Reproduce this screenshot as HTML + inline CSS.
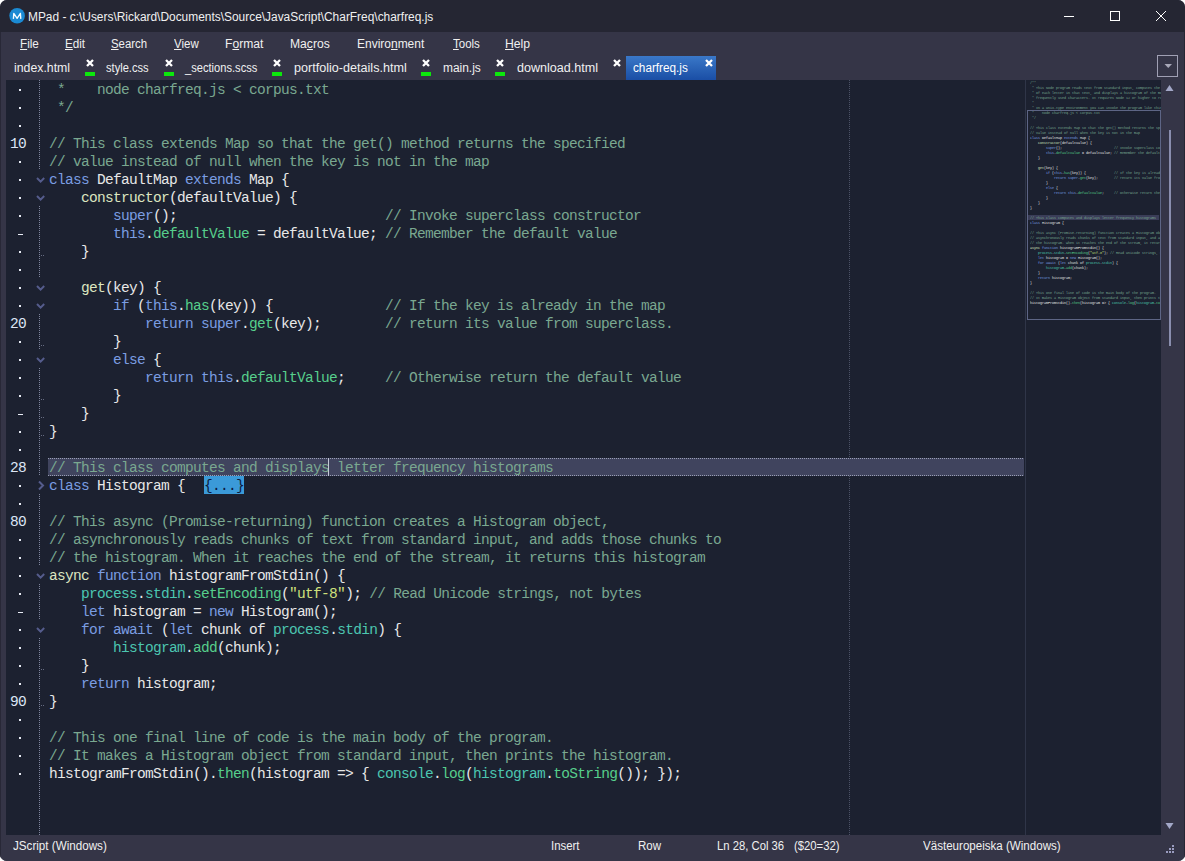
<!DOCTYPE html>
<html><head><meta charset="utf-8">
<style>
*{margin:0;padding:0;box-sizing:border-box}
html,body{width:1185px;height:861px;overflow:hidden;background:#ffffff}
body{position:relative;font-family:"Liberation Sans",sans-serif;}
#win{position:absolute;left:0;top:0;width:1185px;height:861px;background:#353547;border-radius:7px;overflow:hidden}
#edgeL{position:absolute;left:0;top:32px;width:1px;height:829px;background:#282837}
#edgeR{position:absolute;left:1184px;top:32px;width:1px;height:829px;background:#262634}
#title{position:absolute;left:0;top:0;width:1185px;height:32px;background:#252633}
#title .ttl{position:absolute;left:28px;top:9px;font-size:12px;color:#f2f2f2;white-space:pre}
#icon{position:absolute;left:10px;top:9px;width:15px;height:15px;border-radius:50%;background:#1a8ad6}
#icon span{position:absolute;left:0;top:2px;width:15px;text-align:center;font-size:10px;font-weight:bold;color:#fff}
.wb{position:absolute}
#menu{position:absolute;left:1px;top:32px;width:1184px;height:24px;background:#353547}
.mi{position:absolute;top:5px;font-size:12px;color:#f0f0f0;white-space:pre}
.mi u{text-decoration:underline;text-underline-offset:1px}
#tabs{position:absolute;left:1px;top:56px;width:1184px;height:24px;background:#353547}
.tab{position:absolute;top:5px;font-size:12px;color:#f0f0f0;white-space:pre}
.xm{position:absolute;top:3.3px}
.gb{position:absolute;top:16px;width:10px;height:4px;background:#0ce80c}
#atab{position:absolute;left:625px;top:0;width:90px;height:24px;background:linear-gradient(#3a78c8,#1a4ea5)}
#dd{position:absolute;left:1156px;top:-1px;width:21px;height:22px;border:1px solid #a0a0b4}
#editor{position:absolute;left:6px;top:80px;width:1155px;height:755px;background:#1c2130;overflow:hidden}
#gutter{position:absolute;left:0;top:0;width:43px;height:755px}
.ln{position:absolute;left:4px;width:16px;margin-top:1px;font-family:"Liberation Mono",monospace;font-size:14.5px;letter-spacing:-0.7013px;line-height:18px;color:#dde6f5}
.dot{position:absolute;left:13px;width:2px;height:2px;background:#e8ecf5}
.dash{position:absolute;left:12px;width:5px;height:1px;background:#e8ecf5}
.vdot{position:absolute;left:33px;width:1px;background:repeating-linear-gradient(#80869e 0 1px,transparent 1px 2px)}
.fold{position:absolute;left:29px}
.tick{position:absolute;left:35px;width:3px;height:1px;background:repeating-linear-gradient(90deg,#666c82 0 1px,transparent 1px 2px)}
#curline{position:absolute;left:42px;top:378px;width:976px;height:18px;background:repeating-linear-gradient(90deg,#9a9fb5 0 1px,transparent 1px 2px) 0 0/100% 1px no-repeat,repeating-linear-gradient(90deg,#9a9fb5 0 1px,transparent 1px 2px) 0 17px/100% 1px no-repeat,#40445e}
#cursor{position:absolute;left:322px;top:378px;width:1px;height:18px;background:#c4cad8}
#foldbox{position:absolute;left:198px;top:396px;width:40px;height:18px;background:#3b9ad8}
#foldbox span{position:absolute;left:0;top:1px;font-family:"Liberation Mono",monospace;font-size:14.5px;letter-spacing:-0.7013px;line-height:18px;color:#0b1a40;white-space:pre}
#code{position:absolute;left:43px;top:1px;font-family:"Liberation Mono",monospace;font-size:14.5px;letter-spacing:-0.7013px;line-height:18px;color:#e8e8e8;white-space:pre}
.c{color:#7aa890}
.k{color:#7b9de2}
.p{color:#57cf8c}
.t{color:#4cc6b0}
.d{color:#dde6c0}
.s{color:#cfe07c}
#vline{position:absolute;left:843px;top:0;width:1px;height:755px;background:repeating-linear-gradient(#4c5266 0 1px,transparent 1px 2px)}
#minisep{position:absolute;left:1019px;top:0;width:1px;height:755px;background:#2f3548}
#mini{position:absolute;left:1019px;top:0;width:136px;height:755px;overflow:hidden}
#minicode{position:absolute;left:5px;top:1px;transform-origin:0 0;transform:scale(0.25,0.2778);font-family:"Liberation Mono",monospace;font-size:13.33px;line-height:18px;color:#e8e8e8;white-space:pre}
#minibox{position:absolute;left:2px;top:30px;width:134px;height:210px;border:1px solid #5d6585}
#minicur{position:absolute;left:3px;top:135px;width:131px;height:5px;background:#3a3d58}
#vscroll{position:absolute;left:1161px;top:80px;width:17px;height:755px;background:#353547}
#thumb{position:absolute;left:8px;top:50px;width:2px;height:216px;background:#8a8eae}
#status{position:absolute;left:0;top:835px;width:1185px;height:26px;background:#353547}
.ui{position:absolute;font-size:12.5px;line-height:20px;color:#f0f0f0;white-space:pre;transform-origin:0 0}
.ui u{text-decoration:underline;text-underline-offset:1px}
</style></head><body>
<div id="win">
 <div id="title">
  <svg style="position:absolute;left:0;top:0" width="30" height="30"><circle cx="17.1" cy="15.8" r="7.8" fill="#1b8ad3"/><path d="M13.4 18.9 L13.8 13.4 L17.1 18.4 L20.4 13.4 L20.8 18.9" fill="none" stroke="#f4fbff" stroke-width="1.35" stroke-linejoin="round"/></svg>
  <svg class="wb" style="left:1060px;top:6px" width="20" height="20"><path d="M4 10.5 H14" stroke="#fff" stroke-width="1"/></svg>
  <svg class="wb" style="left:1105px;top:6px" width="20" height="20"><rect x="5.5" y="5.5" width="9" height="9" fill="none" stroke="#fff" stroke-width="1"/></svg>
  <svg class="wb" style="left:1151px;top:6px" width="20" height="20"><path d="M5 5 L15 15 M15 5 L5 15" stroke="#fff" stroke-width="1"/></svg>
 </div>
 <div id="menu">
 </div>
 <div id="tabs">
<svg class="xm" style="left:85.2px" width="8" height="8"><path d="M1 1 L7 7 M7 1 L1 7" stroke="#fff" stroke-width="2.3"/></svg><span class="gb" style="left:84px"></span>
<svg class="xm" style="left:164.2px" width="8" height="8"><path d="M1 1 L7 7 M7 1 L1 7" stroke="#fff" stroke-width="2.3"/></svg><span class="gb" style="left:163px"></span>
<svg class="xm" style="left:272.2px" width="8" height="8"><path d="M1 1 L7 7 M7 1 L1 7" stroke="#fff" stroke-width="2.3"/></svg><span class="gb" style="left:271px"></span>
<svg class="xm" style="left:421.2px" width="8" height="8"><path d="M1 1 L7 7 M7 1 L1 7" stroke="#fff" stroke-width="2.3"/></svg><span class="gb" style="left:420px"></span>
<svg class="xm" style="left:495.2px" width="8" height="8"><path d="M1 1 L7 7 M7 1 L1 7" stroke="#fff" stroke-width="2.3"/></svg><span class="gb" style="left:494px"></span>
<svg class="xm" style="left:612.2px" width="8" height="8"><path d="M1 1 L7 7 M7 1 L1 7" stroke="#fff" stroke-width="2.3"/></svg>
<div id="atab"><svg class="xm" style="left:79.0px" width="8" height="8"><path d="M1 1 L7 7 M7 1 L1 7" stroke="#fff" stroke-width="2.3"/></svg></div>
<div id="dd"><svg width="21" height="22" style="position:absolute;left:0;top:0"><path d="M6.5 8 L14 8 L10.25 12 Z" fill="#a8a8b8"/></svg></div>
 </div>
 <div id="editor">
  <div id="gutter">
<div class="dot" style="top:9px"></div>
<div class="dot" style="top:27px"></div>
<div class="dot" style="top:45px"></div>
<div class="ln" style="top:54px">10</div>
<div class="dot" style="top:81px"></div>
<div class="dot" style="top:99px"></div>
<div class="dot" style="top:117px"></div>
<div class="dot" style="top:135px"></div>
<div class="dash" style="top:154px"></div>
<div class="dot" style="top:171px"></div>
<div class="dot" style="top:189px"></div>
<div class="dot" style="top:207px"></div>
<div class="dot" style="top:225px"></div>
<div class="ln" style="top:234px">20</div>
<div class="dot" style="top:261px"></div>
<div class="dot" style="top:279px"></div>
<div class="dot" style="top:297px"></div>
<div class="dot" style="top:315px"></div>
<div class="dash" style="top:334px"></div>
<div class="dot" style="top:351px"></div>
<div class="dot" style="top:369px"></div>
<div class="ln" style="top:378px">28</div>
<div class="dot" style="top:405px"></div>
<div class="dot" style="top:423px"></div>
<div class="ln" style="top:432px">80</div>
<div class="dot" style="top:459px"></div>
<div class="dot" style="top:477px"></div>
<div class="dot" style="top:495px"></div>
<div class="dot" style="top:513px"></div>
<div class="dash" style="top:532px"></div>
<div class="dot" style="top:549px"></div>
<div class="dot" style="top:567px"></div>
<div class="dot" style="top:585px"></div>
<div class="dot" style="top:603px"></div>
<div class="ln" style="top:612px">90</div>
<div class="dot" style="top:639px"></div>
<div class="dot" style="top:657px"></div>
<div class="dot" style="top:675px"></div>
<div class="dot" style="top:693px"></div>
<div class="vdot" style="top:0px;height:90px"></div>
<div class="vdot" style="top:126px;height:72px"></div>
<div class="vdot" style="top:234px;height:36px"></div>
<div class="vdot" style="top:288px;height:108px"></div>
<div class="vdot" style="top:414px;height:72px"></div>
<div class="vdot" style="top:504px;height:36px"></div>
<div class="vdot" style="top:558px;height:197px"></div>
<svg class="fold" style="top:90px" width="12" height="18"><path d="M2 8 L5.6 11.6 L9.2 8" fill="none" stroke="#555c8c" stroke-width="2"/></svg>
<svg class="fold" style="top:108px" width="12" height="18"><path d="M2 8 L5.6 11.6 L9.2 8" fill="none" stroke="#555c8c" stroke-width="2"/></svg>
<svg class="fold" style="top:198px" width="12" height="18"><path d="M2 8 L5.6 11.6 L9.2 8" fill="none" stroke="#555c8c" stroke-width="2"/></svg>
<svg class="fold" style="top:216px" width="12" height="18"><path d="M2 8 L5.6 11.6 L9.2 8" fill="none" stroke="#555c8c" stroke-width="2"/></svg>
<svg class="fold" style="top:270px" width="12" height="18"><path d="M2 8 L5.6 11.6 L9.2 8" fill="none" stroke="#555c8c" stroke-width="2"/></svg>
<svg class="fold" style="top:396px" width="12" height="18"><path d="M4 5.5 L8 9.5 L4 13.5" fill="none" stroke="#555c8c" stroke-width="2"/></svg>
<svg class="fold" style="top:486px" width="12" height="18"><path d="M2 8 L5.6 11.6 L9.2 8" fill="none" stroke="#555c8c" stroke-width="2"/></svg>
<svg class="fold" style="top:540px" width="12" height="18"><path d="M2 8 L5.6 11.6 L9.2 8" fill="none" stroke="#555c8c" stroke-width="2"/></svg>
<div class="tick" style="top:175px"></div>
<div class="tick" style="top:265px"></div>
<div class="tick" style="top:319px"></div>
<div class="tick" style="top:337px"></div>
<div class="tick" style="top:355px"></div>
<div class="tick" style="top:589px"></div>
<div class="tick" style="top:625px"></div>
  </div>
  <div id="vline"></div>
  <div id="curline"></div>
  <div id="foldbox"><span>{...}</span></div>
  <div id="code"><span class="c"> *    node charfreq.js &lt; corpus.txt</span>
<span class="c"> */</span>

<span class="c">// This class extends Map so that the get() method returns the specified</span>
<span class="c">// value instead of null when the key is not in the map</span>
<span class="k">class</span> DefaultMap <span class="k">extends</span> Map {
    <span class="d">constructor</span>(defaultValue) {
        <span class="k">super</span>();                          <span class="c">// Invoke superclass constructor</span>
        <span class="k">this</span>.<span class="p">defaultValue</span> = defaultValue; <span class="c">// Remember the default value</span>
    }

    <span class="d">get</span>(key) {
        <span class="k">if</span> (<span class="k">this</span>.<span class="p">has</span>(key)) {              <span class="c">// If the key is already in the map</span>
            <span class="k">return</span> <span class="k">super</span>.<span class="p">get</span>(key);        <span class="c">// return its value from superclass.</span>
        }
        <span class="k">else</span> {
            <span class="k">return</span> <span class="k">this</span>.<span class="p">defaultValue</span>;     <span class="c">// Otherwise return the default value</span>
        }
    }
}

<span class="c">// This class computes and displays letter frequency histograms</span>
<span class="k">class</span> Histogram {

<span class="c">// This async (Promise-returning) function creates a Histogram object,</span>
<span class="c">// asynchronously reads chunks of text from standard input, and adds those chunks to</span>
<span class="c">// the histogram. When it reaches the end of the stream, it returns this histogram</span>
<span class="d">async</span> <span class="k">function</span> histogramFromStdin() {
    <span class="t">process</span>.<span class="t">stdin</span>.<span class="p">setEncoding</span>(<span class="s">"utf-8"</span>); <span class="c">// Read Unicode strings, not bytes</span>
    <span class="k">let</span> histogram = <span class="k">new</span> Histogram();
    <span class="k">for</span> <span class="k">await</span> (<span class="k">let</span> chunk of <span class="t">process</span>.<span class="t">stdin</span>) {
        <span class="t">histogram</span>.<span class="p">add</span>(chunk);
    }
    <span class="k">return</span> histogram;
}

<span class="c">// This one final line of code is the main body of the program.</span>
<span class="c">// It makes a Histogram object from standard input, then prints the histogram.</span>
histogramFromStdin().<span class="p">then</span>(histogram =&gt; { <span class="t">console</span>.<span class="p">log</span>(<span class="t">histogram</span>.<span class="p">toString</span>()); });</div>
  <div id="cursor"></div>
  <div id="minisep"></div>
  <div id="mini">
   <div id="minicur"></div>
   <div id="minicode"><span class="c">/**</span>
<span class="c"> * This Node program reads text from standard input, computes the frequency</span>
<span class="c"> * of each letter in that text, and displays a histogram of the most</span>
<span class="c"> * frequently used characters. It requires Node 12 or higher to run.</span>
<span class="c"> *</span>
<span class="c"> * In a Unix-type environment you can invoke the program like this:</span>
<span class="c"> *    node charfreq.js &lt; corpus.txt</span>
<span class="c"> */</span>

<span class="c">// This class extends Map so that the get() method returns the specified</span>
<span class="c">// value instead of null when the key is not in the map</span>
<span class="k">class</span> DefaultMap <span class="k">extends</span> Map {
    <span class="d">constructor</span>(defaultValue) {
        <span class="k">super</span>();                          <span class="c">// Invoke superclass constructor</span>
        <span class="k">this</span>.<span class="p">defaultValue</span> = defaultValue; <span class="c">// Remember the default value</span>
    }

    <span class="d">get</span>(key) {
        <span class="k">if</span> (<span class="k">this</span>.<span class="p">has</span>(key)) {              <span class="c">// If the key is already in the map</span>
            <span class="k">return</span> <span class="k">super</span>.<span class="p">get</span>(key);        <span class="c">// return its value from superclass.</span>
        }
        <span class="k">else</span> {
            <span class="k">return</span> <span class="k">this</span>.<span class="p">defaultValue</span>;     <span class="c">// Otherwise return the default value</span>
        }
    }
}

<span class="c">// This class computes and displays letter frequency histograms</span>
<span class="k">class</span> Histogram {

<span class="c">// This async (Promise-returning) function creates a Histogram object,</span>
<span class="c">// asynchronously reads chunks of text from standard input, and adds those chunks to</span>
<span class="c">// the histogram. When it reaches the end of the stream, it returns this histogram</span>
<span class="d">async</span> <span class="k">function</span> histogramFromStdin() {
    <span class="t">process</span>.<span class="t">stdin</span>.<span class="p">setEncoding</span>(<span class="s">"utf-8"</span>); <span class="c">// Read Unicode strings, not bytes</span>
    <span class="k">let</span> histogram = <span class="k">new</span> Histogram();
    <span class="k">for</span> <span class="k">await</span> (<span class="k">let</span> chunk of <span class="t">process</span>.<span class="t">stdin</span>) {
        <span class="t">histogram</span>.<span class="p">add</span>(chunk);
    }
    <span class="k">return</span> histogram;
}

<span class="c">// This one final line of code is the main body of the program.</span>
<span class="c">// It makes a Histogram object from standard input, then prints the histogram.</span>
histogramFromStdin().<span class="p">then</span>(histogram =&gt; { <span class="t">console</span>.<span class="p">log</span>(<span class="t">histogram</span>.<span class="p">toString</span>()); });</div>
   <div id="minibox"></div>
  </div>
 </div>
 <div id="vscroll">
  <svg style="position:absolute;left:4px;top:4px" width="10" height="8"><path d="M0.5 7 L4.5 1 L8.5 7 Z" fill="#a3a8c8"/></svg>
  <div id="thumb"></div>
  <svg style="position:absolute;left:4px;top:742px" width="10" height="8"><path d="M0.5 1 L4.5 7 L8.5 1 Z" fill="#a3a8c8"/></svg>
 </div>
 <div id="status">
  <svg style="position:absolute;left:1166px;top:10px" width="8" height="8"><g fill="#9a9cc0"><rect x="6" y="0" width="2" height="2"/><rect x="3" y="3" width="2" height="2"/><rect x="6" y="3" width="2" height="2"/><rect x="0" y="6" width="2" height="2"/><rect x="3" y="6" width="2" height="2"/><rect x="6" y="6" width="2" height="2"/></g></svg>
 </div>
<div class="ui" style="left:27.55px;top:7px;transform:scaleX(0.9533)">MPad - c:\Users\Rickard\Documents\Source\JavaScript\CharFreq\charfreq.js</div>
<div class="ui" style="left:19.66px;top:34px;transform:scaleX(0.9368)"><u>F</u>ile</div>
<div class="ui" style="left:64.57px;top:34px;transform:scaleX(0.9333)"><u>E</u>dit</div>
<div class="ui" style="left:111.09px;top:34px;transform:scaleX(0.9105)"><u>S</u>earch</div>
<div class="ui" style="left:174.20px;top:34px;transform:scaleX(0.9185)"><u>V</u>iew</div>
<div class="ui" style="left:225.23px;top:34px;transform:scaleX(0.9692)">F<u>o</u>rmat</div>
<div class="ui" style="left:290.33px;top:34px;transform:scaleX(0.9700)">Ma<u>c</u>ros</div>
<div class="ui" style="left:356.54px;top:34px;transform:scaleX(0.9586)">Enviro<u>n</u>ment</div>
<div class="ui" style="left:452.50px;top:34px;transform:scaleX(0.9207)"><u>T</u>ools</div>
<div class="ui" style="left:505.12px;top:34px;transform:scaleX(0.9760)"><u>H</u>elp</div>
<div class="ui" style="left:13.50px;top:58px;transform:scaleX(0.9842)">index.html</div>
<div class="ui" style="left:106.30px;top:58px;transform:scaleX(0.8875)">style.css</div>
<div class="ui" style="left:184.80px;top:58px;transform:scaleX(0.8901)">_sections.scss</div>
<div class="ui" style="left:293.60px;top:58px;transform:scaleX(1.0081)">portfolio-details.html</div>
<div class="ui" style="left:442.70px;top:58px;transform:scaleX(0.9538)">main.js</div>
<div class="ui" style="left:516.60px;top:58px;transform:scaleX(1.0050)">download.html</div>
<div class="ui" style="left:632.50px;top:58px;transform:scaleX(0.9397);color:#ffffff">charfreq.js</div>
<div class="ui" style="left:13.20px;top:836px;transform:scaleX(0.9310)">JScript (Windows)</div>
<div class="ui" style="left:551.29px;top:836px;transform:scaleX(0.9129)">Insert</div>
<div class="ui" style="left:637.68px;top:836px;transform:scaleX(0.9208)">Row</div>
<div class="ui" style="left:716.80px;top:836px;transform:scaleX(0.9027)">Ln 28, Col 36</div>
<div class="ui" style="left:793.80px;top:836px;transform:scaleX(0.9040)">($20=32)</div>
<div class="ui" style="left:923.30px;top:836px;transform:scaleX(0.9257)">Västeuropeiska (Windows)</div>
<div id="edgeL"></div><div id="edgeR"></div>
</div>
</body></html>
